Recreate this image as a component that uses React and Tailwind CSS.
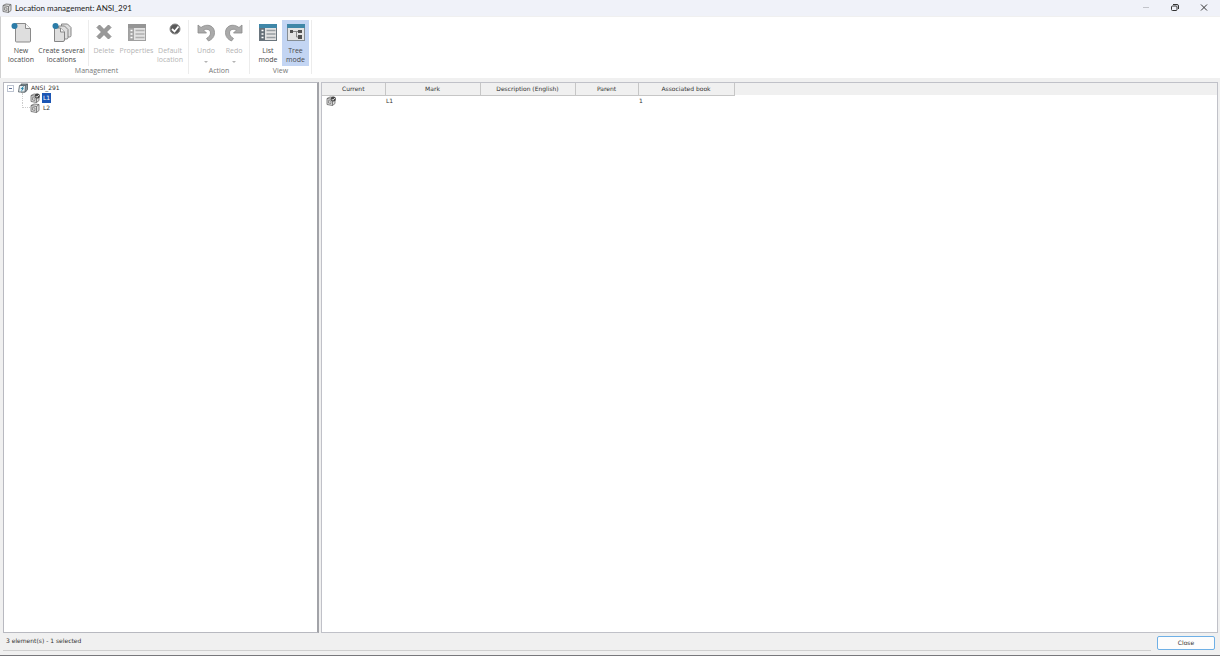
import clsx from "clsx";

function LocationIcon({ className, checked }) {
  return (
    <svg viewBox="0 0 20 20" className={className} fill="none" stroke="#606060" strokeWidth="1.500">
      <path d="M2 5l6-3 10 1v12l-5 4-11-2z" fill="#dedede" />
      <path d="M2 5l11 2v12M13 7l5-4" />
      <path d="M5 9l5 1v5l-5-1z" strokeWidth="1.200" />
      {checked && (
        <>
          <circle cx="14.500" cy="6" r="5" fill="#444" stroke="none" />
          <path d="M11.500 6l2.300 2.500 4-4.500" stroke="#fff" strokeWidth="1.600" />
        </>
      )}
    </svg>
  );
}

function ProjectIcon({ className }) {
  return (
    <svg viewBox="0 0 20 20" className={className} fill="none" stroke="#4f585e" strokeWidth="1.600">
      <path d="M6 2h13v11l-4 5H6z" fill="#8d989e" />
      <path d="M3 5h12l-1 13H1z" fill="#e6eef2" />
      <path d="M15 5l4-3" />
      <path d="M11 6L5 12h3l-2 6L12 10.500H9.500L12 6z" fill="#2383a8" stroke="none" />
    </svg>
  );
}

function PageIcon() {
  return (
    <svg viewBox="0 0 24 24" className="size-6">
      <path d="M6.500 3.500h10l5 5V21a1 1 0 0 1-1 1h-13a1 1 0 0 1-1-1V3.500z" fill="#dedede" stroke="#8a8a8a" />
      <path d="M16.500 3.500v5h5" fill="#f6f6f6" stroke="#8a8a8a" />
      <circle cx="5.500" cy="6" r="3" fill="#2b7ca8" />
    </svg>
  );
}

function PagesIcon() {
  return (
    <svg viewBox="0 0 24 24" className="size-6" fill="#dedede" stroke="#858585">
      <path d="M11.500 4h6l3.500 3.500v8q0 1.500-1.500 1.500h-8z" />
      <path d="M8.500 6h6L18 9.500v8q0 1.500-1.500 1.500h-8z" />
      <path d="M4.500 8h6l4 4v8q0 1.500-1.500 1.500H4.500z" />
      <path d="M10.500 8v4h4" fill="#f6f6f6" />
      <circle cx="5.500" cy="6" r="3" fill="#2b7ca8" stroke="none" />
    </svg>
  );
}

function DeleteIcon() {
  return (
    <svg viewBox="0 0 24 24" className="size-6">
      <path
        d="M5 7.500L7.500 5l4.500 4.500L16.500 5 19 7.500 14.500 12l4.500 4.500-2.500 2.500-4.500-4.500L7.500 19 5 16.500 9.500 12z"
        fill="#999"
        stroke="#8c8c8c"
      />
    </svg>
  );
}

function ListIcon({ disabled }) {
  const frame = disabled ? "#a0a0a0" : "#6a757d";
  return (
    <svg viewBox="0 0 24 24" className="size-6">
      <rect x="3.500" y="4.500" width="17" height="16" fill="#e2e2e2" stroke={frame} />
      <rect x="3" y="4" width="18" height="4" fill={disabled ? "#959595" : "#3f87a8"} />
      <rect x="4" y="8" width="5" height="12" fill={disabled ? "#a5a5a5" : "#667078"} />
      <path d="M5.500 10.500h2M5.500 14h2M5.500 17.500h2" stroke="#fff" strokeWidth="1.300" />
      <path d="M10.500 10.500h9M10.500 14h9M10.500 17.500h9" stroke={disabled ? "#b0b0b0" : "#979da1"} strokeWidth="1.300" />
    </svg>
  );
}

function CheckIcon() {
  return (
    <svg viewBox="0 0 24 24" className="size-6">
      <circle cx="17" cy="9" r="5" fill="#5a5a5a" stroke="#8a8a8a" />
      <path d="M14 9l2.500 2.500L20.500 6.500" fill="none" stroke="#fff" strokeWidth="1.800" />
    </svg>
  );
}

function UndoIcon({ flip }) {
  return (
    <svg viewBox="0 0 24 24" className={clsx("size-6", flip && "-scale-x-100")}>
      <path
        d="M4 5v8h8.500l-3-3c3-1.500 7-.700 7 3 0 2.300-1.500 4-4 5.500l2 2.500c4-1.800 6-4.500 6-8.500C20.500 5.500 13 3 7 7.500z"
        fill="#aaa"
        stroke="#8c8c8c"
        strokeWidth=".800"
      />
    </svg>
  );
}

function TreeIcon() {
  return (
    <svg viewBox="0 0 24 24" className="size-6">
      <rect x="3.500" y="4.500" width="17" height="16" fill="#e4e4e4" stroke="#858d94" />
      <rect x="3" y="4" width="18" height="4" fill="#3f87a8" />
      <path d="M9 11.500h6M12.500 11.500V17H15" fill="none" stroke="#888" />
      <path d="M6 10h3v3H6zM14 10h4v3h-4zM14 15h4v4h-4z" fill="#505050" />
    </svg>
  );
}

function RibbonButton({ icon, label, width, disabled, active, menu }) {
  return (
    <button
      type="button"
      disabled={disabled}
      aria-pressed={active}
      className={clsx(
        "flex h-[46px] shrink-0 flex-col items-center text-[7px] leading-[9px]",
        width,
        disabled ? "text-[#b4b4b4]" : "text-[#4a4a4a]",
        active && "bg-[#c3d5f3]"
      )}
    >
      {icon}
      <span className="mt-0.5 whitespace-pre text-center">{label}</span>
      {menu && <span className="mt-1.5 border-x-2 border-t-2 border-x-transparent border-t-[#b4b4b4]" />}
    </button>
  );
}

function RibbonGroup({ title, children }) {
  return (
    <section className="flex flex-col border-r border-[#ececec]">
      <div className="flex">{children}</div>
      <h2 className="text-center text-[7px] leading-[9px] text-[#777]">{title}</h2>
    </section>
  );
}

const columns = [
  { name: "Current", width: "w-[63px]" },
  { name: "Mark", width: "w-[95px]" },
  { name: "Description (English)", width: "w-[95px]" },
  { name: "Parent", width: "w-[63px]" },
  { name: "Associated book", width: "w-[96px]" },
];

export default function App() {
  return (
    <div className="flex h-screen flex-col overflow-hidden border-b border-[#77777b] bg-[#f0f0f0] font-['Open_Sans','Noto_Sans',sans-serif] text-[#333]">
      <header className="flex h-4 shrink-0 items-center bg-[#f0f2f9] pl-0.5">
        <LocationIcon className="size-[10px]" />
        <h1 className="ml-[3px] font-[Lato,sans-serif] text-[8px] leading-[10px] text-[#222]">
          Location management: ANSI_291
        </h1>
        <div className="ml-auto flex h-full">
          <button type="button" aria-label="Minimize" className="flex w-[29px] items-center justify-center">
            <svg viewBox="0 0 8 8" className="size-2" stroke="#c2c4ca">
              <path d="M1 3.500h6" />
            </svg>
          </button>
          <button type="button" aria-label="Restore" className="flex w-[29px] items-center justify-center">
            <svg viewBox="0 0 8 8" className="size-2" fill="none" stroke="#333">
              <rect x=".500" y="2" width="5.500" height="4.500" rx="1" />
              <path d="M2 .500h4q1.500 0 1.500 1.500v3" />
            </svg>
          </button>
          <button type="button" aria-label="Close window" className="flex w-[29px] items-center justify-center">
            <svg viewBox="0 0 8 8" className="size-2" stroke="#333">
              <path d="M1 .500l6 6M7 .500l-6 6" />
            </svg>
          </button>
          <span className="w-0.5" />
        </div>
      </header>

      <nav className="flex h-[62px] shrink-0 border-t border-l border-[#d0d0d0] border-t-[#f0f0f0] bg-white pt-[3px] pb-1 pl-1">
        <RibbonGroup title="Management">
          <RibbonButton icon={<PageIcon />} label={"New\nlocation"} width="w-8" />
          <RibbonButton icon={<PagesIcon />} label={"Create several\nlocations"} width="w-[49px]" />
          <span className="ml-0.5 w-px bg-[#ececec]" />
          <RibbonButton icon={<DeleteIcon />} label="Delete" width="w-[30px]" disabled />
          <RibbonButton icon={<ListIcon disabled />} label="Properties" width="w-[35px]" disabled />
          <RibbonButton icon={<CheckIcon />} label={"Default\nlocation"} width="w-8" disabled />
          <span className="w-0.5" />
        </RibbonGroup>
        <RibbonGroup title="Action">
          <span className="w-[3px]" />
          <RibbonButton icon={<UndoIcon />} label="Undo" width="w-7" disabled menu />
          <RibbonButton icon={<UndoIcon flip />} label="Redo" width="w-7" disabled menu />
          <span className="w-px" />
        </RibbonGroup>
        <RibbonGroup title="View">
          <span className="w-1" />
          <RibbonButton icon={<ListIcon />} label={"List\nmode"} width="w-7" />
          <RibbonButton icon={<TreeIcon />} label={"Tree\nmode"} width="w-[27px]" active />
          <span className="w-0.5" />
        </RibbonGroup>
      </nav>

      <main className="mr-0.5 ml-[3px] mt-1 flex min-h-0 flex-1 font-['DejaVu_Sans',sans-serif] text-[6px] leading-[10px]">
        <aside className="w-[316px] shrink-0 border border-r-2 border-[#b8b9c0] border-r-[#a2a3a8] bg-white pl-[3px]">
          <ul>
            <li>
              <div className="flex h-[10px] items-center">
                <button
                  type="button"
                  aria-label="Collapse ANSI_291"
                  className="flex size-[7px] items-center justify-center border border-[#bcc3d0]"
                >
                  <span className="h-px w-[3px] bg-[#5e6f94]" />
                </button>
                <ProjectIcon className="ml-1 size-[10px]" />
                <span className="ml-[3px]">ANSI_291</span>
              </div>
              <ul className="ml-[15px]">
                <li className="flex h-[10px] items-center">
                  <span className="h-full w-2 border-l border-dotted border-[#ccc]" />
                  <LocationIcon className="size-[10px]" checked />
                  <span className="ml-0.5 bg-[#1c56b4] px-px text-white">L1</span>
                </li>
                <li className="flex h-[10px] items-center">
                  <span className="mb-auto h-[5px] w-2 border-b border-l border-dotted border-[#ccc]" />
                  <LocationIcon className="size-[10px]" />
                  <span className="ml-0.5 px-px">L2</span>
                </li>
              </ul>
            </li>
          </ul>
        </aside>

        <section className="ml-0.5 min-w-0 flex-1 border border-[#c0c1c8] bg-white">
          <table className="w-full table-fixed border-collapse">
            <thead className="bg-[#f0f0f0]">
              <tr className="h-3">
                {columns.map((column) => (
                  <th
                    key={column.name}
                    scope="col"
                    className={clsx("border-r border-b border-[#c6c6c6] p-0 text-center font-normal", column.width)}
                  >
                    {column.name}
                  </th>
                ))}
                <td />
              </tr>
            </thead>
            <tbody>
              <tr className="h-[10px]">
                <td className="p-0 pl-1">
                  <LocationIcon className="size-[10px]" checked />
                </td>
                <td className="p-0 pl-px">L1</td>
                <td className="p-0" />
                <td className="p-0" />
                <td className="p-0 pl-px">1</td>
                <td className="p-0" />
              </tr>
            </tbody>
          </table>
        </section>
      </main>

      <footer className="flex h-[22px] shrink-0 items-start pt-[3px] pr-[5px] pl-[3px] font-['DejaVu_Sans',sans-serif] text-[6px] leading-[10px]">
        <p className="mr-1.5 h-[15px] flex-1 border-b border-[#cfcfcf] pl-[3px]">3 element(s) - 1 selected</p>
        <button
          type="button"
          className="h-[14px] w-[58px] rounded-xs border border-[#6fb0e6] bg-[#fdfdfd] text-center leading-[12px]"
        >
          Close
        </button>
      </footer>
    </div>
  );
}
